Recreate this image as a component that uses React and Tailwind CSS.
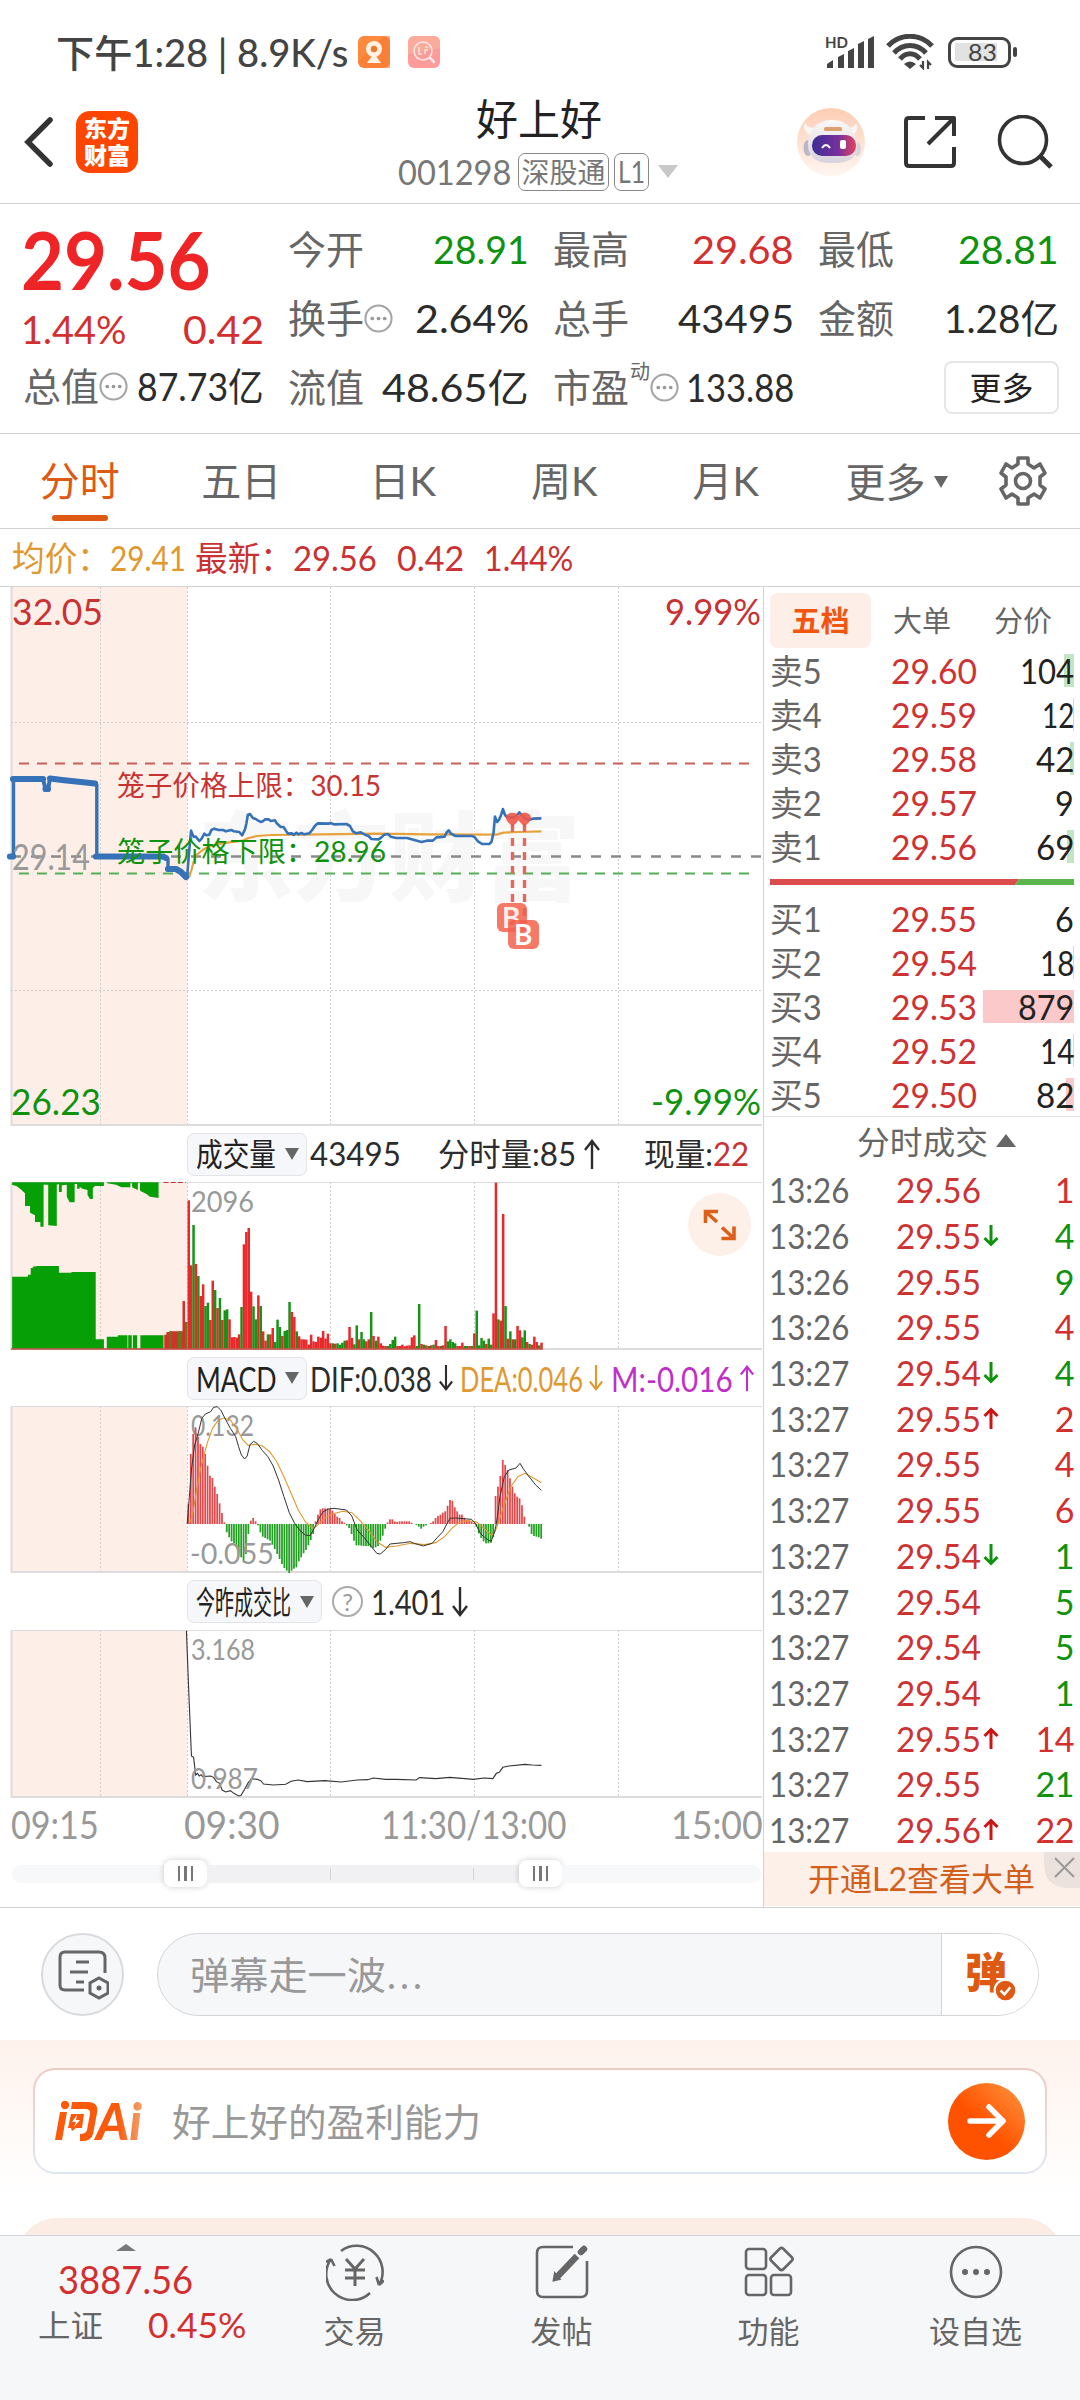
import { useLayoutEffect, useRef, useState } from "react";

const quotes = [
  [
    { label: "今开", value: "28.91", color: "text-[#0f930f]", w: "w-[96px]" },
    { label: "换手", value: "2.64%", color: "text-[#2c2c2c]", w: "w-[114px]", dots: true },
    { label: "流值", value: "48.65亿", color: "text-[#2c2c2c]", w: "w-[147px]" },
  ],
  [
    { label: "最高", value: "29.68", color: "text-[#d42f2f]", w: "w-[102px]" },
    { label: "总手", value: "43495", color: "text-[#2c2c2c]", w: "w-[116px]" },
    { label: "市盈", value: "133.88", color: "text-[#2c2c2c]", w: "w-[108px]", dots: true, sup: "动" },
  ],
  [
    { label: "最低", value: "28.81", color: "text-[#0f930f]", w: "w-[101px]" },
    { label: "金额", value: "1.28亿", color: "text-[#2c2c2c]", w: "w-[115px]" },
  ],
];

const sells = [
  { label: "卖5", price: "29.60", vol: "104", bar: "w-[10px]", w: "w-[54px]" },
  { label: "卖4", price: "29.59", vol: "12", bar: "w-px", w: "w-[32px]" },
  { label: "卖3", price: "29.58", vol: "42", bar: "w-1", w: "w-[38px]" },
  { label: "卖2", price: "29.57", vol: "9", bar: "w-0", w: "w-[19px]" },
  { label: "卖1", price: "29.56", vol: "69", bar: "w-[7px]", w: "w-[38px]" },
];

const buys = [
  { label: "买1", price: "29.55", vol: "6", bar: "w-0", w: "w-[19px]" },
  { label: "买2", price: "29.54", vol: "18", bar: "w-px", w: "w-[34px]" },
  { label: "买3", price: "29.53", vol: "879", bar: "w-[91px]", w: "w-[56px]" },
  { label: "买4", price: "29.52", vol: "14", bar: "w-px", w: "w-[34px]" },
  { label: "买5", price: "29.50", vol: "82", bar: "w-2", w: "w-[38px]" },
];

const trades = [
  ["13:26", "29.56", "", "1", "r"],
  ["13:26", "29.55", "down", "4", "g"],
  ["13:26", "29.55", "", "9", "g"],
  ["13:26", "29.55", "", "4", "r"],
  ["13:27", "29.54", "down", "4", "g"],
  ["13:27", "29.55", "up", "2", "r"],
  ["13:27", "29.55", "", "4", "r"],
  ["13:27", "29.55", "", "6", "r"],
  ["13:27", "29.54", "down", "1", "g"],
  ["13:27", "29.54", "", "5", "g"],
  ["13:27", "29.54", "", "5", "g"],
  ["13:27", "29.54", "", "1", "g"],
  ["13:27", "29.55", "up", "14", "r"],
  ["13:27", "29.55", "", "21", "g"],
  ["13:27", "29.56", "up", "22", "r"],
];

// one entry per minute from 09:30, r = up, g = down
const volumes =
  "r445 r250 g371 r254 g218 r158 r193 g128 g138 r86 r204 g176 r122 g152 r86 g115 g118 r88 r34 r35 r33 r43 g125 r313 r350 r362 r171 g127 g88 r160 g128 r52 r24 g43 r43 r62 g20 g87 g65 r38 g53 g56 g140 r110 r95 g52 r37 r28 r28 r27 r12 r42 r22 r20 r36 r33 r53 r30 r45 r16 g16 r15 g16 g12 g18 g24 r25 r65 r32 g13 g70 r28 g50 g28 r22 r28 g110 r38 g24 r36 r16 r9 r8 g8 g14 g26 g36 r8 r8 r12 r7 r9 r10 r34 r40 g8 g134 r14 g12 r10 g8 r10 g12 r26 r8 g8 r10 r68 g22 g28 g20 g16 r8 r8 r18 g8 g8 r8 g8 r46 g114 g10 g32 g24 r14 g30 g12 r106 r498 g88 r84 r404 g128 r30 g52 r28 g28 r68 r55 g34 g55 r20 g14 r12 r36 r20 g10 r18".split(
    " "
  );

const macd = [
  60, 210, 270, 290, 262, 240, 232, 210, 175, 145, 138, 112, 90, 62, 33, 5, -25, -40, -52, -58,
  -68, -85, -100, -112, -90, -30, 10, 18, 8, -4, -25, -38, -42, -46, -50, -62, -75, -90, -105,
  -120, -132, -140, -147, -140, -134, -130, -112, -100, -88, -78, -64, -48, -30, 8, 28, 44, 47,
  47, 47, 46, 40, 30, 22, 18, 8, 4, -4, -12, -30, -50, -64, -64, -65, -66, -66, -66, -70, -72,
  -70, -66, -50, -35, -14, 5, 14, 14, 8, 6, 8, 8, 8, 8, 8, 4, 0, -3, -8, -14, -8, -4, 0, 3, 8,
  18, 24, 28, 34, 38, 55, 72, 70, 50, 38, 28, 28, 18, 12, 10, 8, 4, -8, -28, -42, -52, -58, -58,
  -56, -40, 84, 112, 144, 192, 177, 162, 137, 112, 92, 82, 77, 56, 22, 0, -8, -30, -36, -38, -40,
  -44,
];

const priceLine =
  "524,410 530,330 535,272 542,290 548,290 558,303 565,295 572,281 578,286 586,284 592,270 600,266 612,270 625,270 632,274 648,270 655,274 670,276 678,286 686,268 690,250 694,224 700,222 708,234 716,237 722,241 730,246 736,244 742,238 752,238 758,243 770,241 774,249 780,255 786,261 794,261 800,271 806,281 818,280 822,285 830,278 836,283 844,279 852,283 866,280 874,270 882,257 890,250 920,251 925,249 935,253 970,252 980,258 988,274 998,280 1010,277 1022,284 1032,288 1040,297 1060,298 1068,292 1076,284 1086,282 1094,290 1110,294 1140,294 1160,300 1180,306 1195,302 1212,302 1222,292 1245,290 1250,278 1256,271 1262,280 1275,288 1320,288 1328,290 1338,304 1350,312 1370,312 1376,306 1382,278 1386,230 1392,246 1398,238 1403,225 1408,207 1414,225 1420,232 1440,232 1448,225 1454,217 1460,224 1468,234 1480,240 1492,236 1516,235";
const avgLine =
  "524,412 530,410 536,390 542,365 550,345 570,328 590,318 620,310 680,302 695,294 720,288 760,285 900,283 1060,281 1200,283 1390,284 1410,278 1450,276 1516,274";
const difLine =
  "524,1242 528,1190 536,1080 545,1005 555,970 565,925 575,912 590,905 598,892 608,890 618,900 630,925 645,955 660,980 668,1010 676,1035 685,1047 692,1038 700,1004 710,994 720,1000 735,1022 750,1040 765,1068 780,1110 795,1160 810,1208 825,1240 840,1262 855,1275 868,1277 880,1255 893,1225 905,1205 920,1197 935,1195 970,1200 985,1218 1000,1260 1020,1283 1040,1310 1055,1330 1065,1332 1080,1318 1092,1302 1130,1298 1148,1295 1160,1300 1185,1308 1210,1300 1225,1282 1240,1265 1252,1240 1260,1225 1275,1224 1320,1228 1330,1238 1345,1270 1360,1285 1375,1295 1385,1265 1390,1240 1400,1160 1412,1100 1425,1080 1445,1074 1456,1060 1465,1076 1480,1098 1500,1125 1516,1141";
const deaLine =
  "530,1242 540,1210 552,1130 565,1060 580,1000 595,955 610,932 625,924 645,930 665,960 680,990 695,1006 715,1003 735,1008 755,1025 775,1055 795,1100 815,1150 835,1200 855,1235 875,1255 885,1250 905,1228 930,1212 960,1204 985,1208 1005,1228 1030,1258 1055,1295 1080,1312 1110,1308 1150,1300 1190,1304 1220,1298 1245,1280 1265,1255 1285,1238 1310,1232 1335,1236 1355,1255 1375,1275 1385,1268 1395,1240 1410,1190 1430,1130 1450,1100 1470,1090 1490,1102 1516,1118";
const ratioLine =
  "522,392 528,560 536,768 542,772 548,825 553,820 558,828 563,824 568,830 590,828 598,832 606,845 615,850 622,870 632,876 645,872 655,880 668,888 675,886 685,868 695,848 705,836 720,838 730,842 738,852 765,855 800,853 815,844 835,840 860,845 910,842 955,846 1000,840 1030,839 1045,834 1080,838 1110,838 1165,840 1175,833 1220,836 1260,832 1325,838 1355,834 1380,836 1390,820 1398,817 1408,802 1425,798 1470,793 1490,795 1516,796";

// Text squeezed or stretched to the width of its box
const Fit = ({ className = "", children }) => {
  const box = useRef(null);
  const inner = useRef(null);
  const [scale, setScale] = useState(1);

  useLayoutEffect(() => {
    setScale(box.current.offsetWidth / inner.current.offsetWidth);
  }, [children]);

  return (
    <span ref={box} className={`inline-block shrink-0 whitespace-nowrap ${className}`}>
      <span
        ref={inner}
        className="inline-block origin-left"
        style={{ transform: `scaleX(${scale})` }}
      >
        {children}
      </span>
    </span>
  );
};

const Dots = () => (
  <svg className="size-[29px] shrink-0" viewBox="0 0 28 28" fill="none">
    <circle cx="14" cy="14" r="12.6" stroke="#a5a5a5" strokeWidth="2" />
    <circle cx="8" cy="14" r="1.8" fill="#999" />
    <circle cx="14" cy="14" r="1.8" fill="#999" />
    <circle cx="20" cy="14" r="1.8" fill="#999" />
  </svg>
);

const StatusBar = () => (
  <div className="flex h-[90px] items-center pl-[56px] pt-3.5 text-[38px] text-[#444]">
    <Fit className="w-[292px] font-medium leading-10">下午1:28 | 8.9K/s</Fit>
    <svg className="ml-2.5 size-8" viewBox="0 0 32 32">
      <rect width="32" height="32" rx="6" fill="#fb8a3c" />
      <path d="M0 26L26 0H32V32H6Z" fill="#fa7a33" opacity=".6" />
      <circle cx="16" cy="13" r="8" fill="#fff1e4" />
      <circle cx="16" cy="13" r="3.2" fill="#f07a2c" />
      <path d="M14 20H18L23 27H9Z" fill="#fff1e4" />
    </svg>
    <svg className="ml-[18px] size-8" viewBox="0 0 32 32" fill="none">
      <rect width="32" height="32" rx="6" fill="#fb9c9a" />
      <path d="M0 6a6 6 0 0 1 6-6H26a6 6 0 0 1 6 6V12L0 18Z" fill="#fcb09a" opacity=".7" />
      <circle cx="15" cy="15" r="9" stroke="#ffe6e4" strokeWidth="1.6" />
      <path d="M11 11V18H14M17 18V14H20M17 11H20" stroke="#ffe6e4" strokeWidth="1.4" />
      <path d="M22 22L26 26" stroke="#ffe6e4" strokeWidth="2.5" strokeLinecap="round" />
    </svg>
    <div className="ml-[385px] flex items-center">
      <svg className="h-9 w-[50px]" viewBox="0 0 50 36">
        <text x="0" y="14" fontSize="15" fontWeight="700" fill="#444" textLength="23">
          HD
        </text>
        <path
          d="M2 34V30L8 26V34ZM13 34V23L19 20V34ZM23 34V17L29 14V34ZM33 34V10L39 7V34ZM43 34V5L49 2V34Z"
          fill="#444"
        />
      </svg>
      <svg className="ml-[11px] h-9 w-[48px]" viewBox="0 0 48 36" fill="none" stroke="#444">
        <path d="M2 12C14 -1 34 -1 46 12" strokeWidth="5" />
        <path d="M8 19C17 9 31 9 40 19" strokeWidth="5" />
        <path d="M14 25C20 18 28 18 34 25" strokeWidth="5" />
        <path d="M18 30Q24 25 30 30L24 35Z" fill="#444" stroke="none" />
        <path d="M37 27V34L34 31M42 35V28L45 31" strokeWidth="2.2" />
      </svg>
      <div className="ml-3.5 flex h-[31px] w-[63px] items-center rounded-[9px] border-[3px] border-[#444] p-1">
        <div className="flex h-[18px] w-[42px] items-center justify-end bg-[#e2e2e2] text-[24px] leading-none">
          <Fit className="w-[29px]">83</Fit>
        </div>
      </div>
      <div className="ml-0.5 h-2.5 w-1 rounded bg-[#444]" />
    </div>
  </div>
);

const Header = () => (
  <header className="grid h-[114px] grid-cols-[398px_282px_1fr] border-b border-[#d2d2d2]">
    <div className="flex items-start pl-[24px] pt-[21px]">
      <svg className="mt-1.5 h-[50px] w-[30px]" viewBox="0 0 30 50" fill="none">
        <path d="M26 3L4 25L26 47" stroke="#333" strokeWidth="5.500" strokeLinecap="round" />
      </svg>
      <div className="ml-[22px] flex size-[62px] flex-col items-center justify-center rounded-[14px] bg-[#ff4600] text-[23px] font-black leading-[27px] text-white">
        <span>东方</span>
        <span>财富</span>
      </div>
    </div>
    <div className="flex flex-col items-center">
      <Fit className="mt-[3px] w-[126px] text-[42px] leading-[52px] text-[#222]">好上好</Fit>
      <div className="mt-[7px] flex h-[39px] w-full items-center text-[34px] text-[#777]">
        <Fit className="w-[113px]">001298</Fit>
        <span className="ml-[7px] flex h-[38px] w-[91px] items-center justify-center rounded-[7px] border border-[#888] text-[28px]">
          <Fit className="w-[84px] leading-8">深股通</Fit>
        </span>
        <span className="ml-[5px] flex h-[38px] w-[35px] items-center justify-center rounded-[7px] border border-[#888] text-[31px]">
          <Fit className="w-[27px]">L1</Fit>
        </span>
        <svg className="ml-[9px] h-3.5 w-5" viewBox="0 0 20 14">
          <path d="M0 0H20L10 13Z" fill="#c8c8c8" />
        </svg>
      </div>
    </div>
    <div className="flex items-start pl-[117px] pt-[18px]">
      <svg className="size-[68px]" viewBox="0 0 68 68">
        <defs>
          <linearGradient id="halo" x2="0" y2="1">
            <stop stopColor="#fdcdb3" />
            <stop offset="1" stopColor="#fff6f1" />
          </linearGradient>
          <linearGradient id="visor">
            <stop stopColor="#3b2f96" />
            <stop offset=".6" stopColor="#7a2f9c" />
            <stop offset="1" stopColor="#e2435e" />
          </linearGradient>
          <linearGradient id="shell" x2="0" y2="1">
            <stop stopColor="#fbf8f8" />
            <stop offset="1" stopColor="#d8d3dc" />
          </linearGradient>
        </defs>
        <circle cx="34" cy="34" r="34" fill="url(#halo)" />
        <path d="M13 27C6 23 6 17 8 15C11 20 16 20 20 20ZM49 20C54 20 58 19 59 15C62 20 60 25 54 28Z" fill="#faf6f6" />
        <ellipse cx="11" cy="40" rx="4.500" ry="8" fill="#b9b7c2" />
        <ellipse cx="60" cy="41" rx="4" ry="7" fill="#d8d4da" />
        <path d="M11 36C12 18 24 12 35 12C48 12 58 20 60 37C62 50 50 56 34 55C20 55 11 50 11 36Z" fill="url(#shell)" />
        <rect x="27" y="19" width="18" height="4" rx="1.500" fill="#dba06c" />
        <rect x="15" y="27" width="44" height="21" rx="10" fill="url(#visor)" />
        <path d="M25 40Q29 34 33 40" stroke="#fff" strokeWidth="2" fill="none" />
        <rect x="43" y="32" width="6" height="9" rx="2" fill="#fff" />
      </svg>
      <svg className="ml-[38px] mt-[7px] size-[54px]" viewBox="0 0 54 54" fill="none" stroke="#333" strokeWidth="4">
        <path d="M22 3H6Q3 3 3 6V48Q3 51 6 51H48Q51 51 51 48V32M32 3H51V21M51 3L25 29" strokeLinejoin="round" />
      </svg>
      <svg className="ml-[40px] mt-[7px] size-[56px]" viewBox="0 0 56 56" fill="none" stroke="#333" strokeWidth="3.600">
        <circle cx="26" cy="25" r="23.500" />
        <path d="M43 41L54 52" strokeWidth="5" />
      </svg>
    </div>
  </header>
);

const Quote = () => (
  <section className="grid h-[230px] grid-cols-4 gap-x-6 border-b border-[#d2d2d2] pl-[23px] pr-[21px] text-[39px]">
    <div className="flex flex-col">
      <Fit className="-ml-0.5 mt-[15px] w-[190px] text-[80px] font-bold leading-[80px] text-[#ee2426]">
        29.56
      </Fit>
      <div className="mt-[5px] flex h-[50px] items-center justify-between text-[#d42f2f]">
        <Fit className="-ml-0.5 w-[105px]">1.44%</Fit>
        <Fit className="w-[81px]">0.42</Fit>
      </div>
      <div className="mt-[7px] flex h-[50px] items-center">
        <Fit className="w-[76px] text-[#666]">总值</Fit>
        <Dots />
        <Fit className="ml-auto w-[127px] text-[#2c2c2c]">87.73亿</Fit>
      </div>
    </div>
    {quotes.map((col, i) => (
      <div key={i} className="flex flex-col pt-[11px]">
        {col.map((item) => (
          <div key={item.label} className="flex h-[69px] items-center">
            <Fit className="w-[76px] text-[#666]">{item.label}</Fit>
            {item.sup && (
              <sup className="mb-3.5 ml-px text-[20px] leading-none text-[#666]">{item.sup}</sup>
            )}
            {item.dots && <Dots />}
            <Fit className={`ml-auto ${item.w} ${item.color}`}>{item.value}</Fit>
          </div>
        ))}
        {i === 2 && (
          <button className="ml-auto mt-2 flex h-[53px] w-[115px] items-center justify-center rounded-lg border-2 border-[#e6e6e6] text-[32px] text-[#222]">
            更多
          </button>
        )}
      </div>
    ))}
  </section>
);

const PeriodTabs = () => (
  <nav className="flex h-[95px] border-b border-[#d2d2d2] text-[40px] text-[#666]">
    {["分时", "五日", "日K", "周K", "月K"].map((name, i) => (
      <div
        key={name}
        className={`flex w-[161.5px] flex-col items-center pr-0.5 pt-[22px] leading-[50px] ${
          i === 0 ? "text-[#de5a12]" : ""
        }`}
      >
        {name}
        {i === 0 && <span className="mt-[9px] h-1.5 w-[56px] rounded-full bg-[#de5a12]" />}
      </div>
    ))}
    <div className="ml-[38px] flex h-[95px] items-center">
      <Fit className="w-[80px]">更多</Fit>
      <svg className="ml-2 h-3 w-3.5" viewBox="0 0 14 12">
        <path d="M0 0H14L7 12Z" fill="#666" />
      </svg>
    </div>
    <svg className="ml-[49px] mt-[21px] size-[52px]" viewBox="0 0 52 52" fill="none" stroke="#666" strokeWidth="3.600" strokeLinejoin="round">
      <path d="M21 3H31V9L37 13L43 9L48 18L43 22V30L48 34L43 43L37 39L31 43V49H21V43L15 39L9 43L4 34L9 30V22L4 18L9 9L15 13L21 9Z" />
      <circle cx="26" cy="26" r="7.500" />
    </svg>
  </nav>
);

const Legend = () => (
  <div className="flex h-[58px] items-center border-b border-[#d2d2d2] pl-[12px] text-[34px] text-[#c83232]">
    <div className="flex text-[#e0982f]">
      <Fit className="w-[98px]">均价：</Fit>
      <Fit className="w-[76px]">29.41</Fit>
    </div>
    <Fit className="ml-[9px] w-[98px]">最新：</Fit>
    <Fit className="w-[84px]">29.56</Fit>
    <Fit className="ml-[20px] w-[67px]">0.42</Fit>
    <Fit className="ml-[20px] w-[89px]">1.44%</Fit>
  </div>
);

const Label = ({ x, y, w, size, fill, children }) => (
  <text x={x} y={y} fontSize={size} fill={fill} textLength={w} lengthAdjust="spacingAndGlyphs">
    {children}
  </text>
);

const Grid = ({ top, bottom }) => (
  <>
    <rect x="11" y={top} width="176" height={bottom - top} fill="#fdeee8" />
    <g stroke="#ccc" strokeWidth="1" strokeDasharray="2 2">
      {[100.5, 187.5, 330.5, 474.5, 618.5].map((x) => (
        <path key={x} d={`M${x} ${top}V${bottom}`} />
      ))}
    </g>
    <path d={`M11.5 ${top}V${bottom}`} stroke="#dcdcdc" strokeWidth="2" />
    <path d={`M11 ${bottom - 1}H762`} stroke="#dcdcdc" strokeWidth="2" />
  </>
);

const PriceChart = () => (
  <svg className="block h-[539px] w-[763px]" viewBox="0 587 763 539" fill="none">
    <Grid top={587} bottom={1126} />
    <path d="M11 722.5H762M11 990.5H762" stroke="#ccc" strokeDasharray="2 2" />
    <text x="198" y="893" fontSize="97" fontWeight="900" fill="#f7f7f7" textLength="382" lengthAdjust="spacingAndGlyphs">
      东方财富
    </text>
    <path d="M19 763.5H750" stroke="#c86058" strokeWidth="1.800" strokeDasharray="10 8" />
    <path d="M19 873.5H750" stroke="#55b055" strokeWidth="1.800" strokeDasharray="10 8" />
    <path d="M11 856.5H762" stroke="#8a8a8a" strokeWidth="2.400" strokeDasharray="10 10" />
    <g transform="translate(0 740) scale(.35714 .33333)" strokeLinejoin="round">
      <polyline points={avgLine} stroke="#e8a23c" strokeWidth="2.200" vectorEffect="non-scaling-stroke" />
      <polyline points={priceLine} stroke="#3672b8" strokeWidth="2.600" vectorEffect="non-scaling-stroke" />
    </g>
    <path d="M13.5 856V779M96.8 784V856M168 858V869" stroke="#3672b8" strokeWidth="3.400" />
    <path
      d="M10 856.500H13M13 779H43M45.500 789H48M50 778.500L62 780L95 783.500M96 856.500H163L166 858M168 869H176L181 872L186 877"
      stroke="#3672b8"
      strokeWidth="6.200"
      strokeLinecap="round"
      strokeLinejoin="round"
    />
    <path d="M43 779L45.500 789M48 789L50 779" stroke="#3672b8" strokeWidth="4" />
    <path d="M512.5 824V903M524.5 824V920" stroke="#e2695d" strokeWidth="3.400" strokeDasharray="8 6" />
    <g fill="#ef5548" fillOpacity=".9">
      <path d="M506 818C506 811 519 811 519 818C519 822 515 823 512.500 827C510 823 506 822 506 818Z" />
      <path d="M518 818C518 811 531 811 531 818C531 822 527 823 524.500 827C522 823 518 822 518 818Z" />
    </g>
    <g fontSize="28" fontWeight="700">
      <rect x="497" y="903" width="30" height="29" rx="6" fill="#f4604c" fillOpacity=".85" />
      <text x="502" y="927.500" fill="#fff" fillOpacity=".9">B</text>
      <rect x="508" y="920" width="31" height="29" rx="6" fill="#f4604c" fillOpacity=".85" />
      <text x="514" y="944.500" fill="#fff">B</text>
    </g>
    <Label x="12" y="625" w="91" size="37" fill="#c83232">32.05</Label>
    <Label x="665" y="625" w="96" size="37" fill="#c83232">9.99%</Label>
    <Label x="12" y="870" w="78" size="37" fill="#999">29.14</Label>
    <Label x="11" y="1115" w="90" size="37" fill="#0f930f">26.23</Label>
    <Label x="651" y="1115" w="110" size="37" fill="#0f930f">-9.99%</Label>
    <Label x="117" y="796" w="264" size="28" fill="#c83232">笼子价格上限：30.15</Label>
    <Label x="117" y="862" w="269" size="28" fill="#0f930f">笼子价格下限：28.96</Label>
  </svg>
);

const VolumeChart = () => (
  <svg className="block h-[168px] w-[763px]" viewBox="0 1182 763 168" fill="none">
    <Grid top={1182} bottom={1350} />
    <path d="M11 1182.5H762" stroke="#dcdcdc" />
    <g transform="translate(0 1110) scale(.35714 .33333)">
      <g fill="#06a006">
        <path d="M34 716V500H78V494H86V474H92V470L105 468H165V488H200V486H268V688H291V716ZM299 716V680H330V676H357V716ZM359 716V676H369V716ZM372 716V676H384V716ZM393 716V676H458V716Z" />
        <path d="M34 217V225L46 228L58 238L70 250V288H84V308L98 316V336H113V350H122V224H135V346L159 348V224L165 222V246H173V226L187 224V260L195 277H209V222H216V236H223V230L231 236L245 240V255L252 267H260V234L266 228H291V217ZM300 217V220L325 224L340 232H365V220H370V232L386 240V218H392V242L410 252L420 260L444 264V217Z" />
      </g>
      <path d="M458 217H520" stroke="#c83232" strokeWidth="4" strokeDasharray="14 6" />
      <path d="M460 716V674H466V666H474V664H511V573H518V716Z" fill="#d23028" />
      <path d="M474 716V664H480V716ZM498 716V664H509V716ZM518 716V636H525V716Z" fill="#5f7d1c" />
      {volumes.map((item, i) => {
        const h = Number(item.slice(1));
        return (
          <rect
            key={i}
            x={525 + i * 6.72}
            y={716 - h}
            width="7"
            height={h}
            fill={item[0] === "r" ? "#e8282a" : "#179417"}
          />
        );
      })}
    </g>
    <path d="M11 1349H543" stroke="#c04a3a" strokeWidth="1.400" />
    <Label x="191" y="1212" w="63" size="28" fill="#999">2096</Label>
    <circle cx="719.500" cy="1224.500" r="31.500" fill="#fdf0e9" />
    <path
      d="M705.500 1223V1211.500H718M706 1212L717 1222M721.500 1238.500H734V1226.500M733.500 1238L722 1227.500"
      stroke="#dc5f1a"
      strokeWidth="3.600"
    />
  </svg>
);

const MacdChart = () => (
  <svg className="block h-[167px] w-[763px]" viewBox="0 1406 763 167" fill="none">
    <Grid top={1406} bottom={1573} />
    <path d="M11 1406.5H762" stroke="#dcdcdc" />
    <Label x="191" y="1436" w="63" size="28" fill="#999">0.132</Label>
    <g transform="translate(0 1110) scale(.35714 .33333)">
      {macd.map((v, i) => (
        <rect
          key={i}
          x={525 + i * 6.72}
          y={v > 0 ? 1242 - v : 1242}
          width="4.900"
          height={Math.abs(v)}
          fill={v > 0 ? "#e2474a" : "#22a022"}
        />
      ))}
      <polyline points={deaLine} stroke="#e0982f" strokeWidth="1.100" vectorEffect="non-scaling-stroke" />
      <polyline points={difLine} stroke="#333" strokeWidth="1" vectorEffect="non-scaling-stroke" />
    </g>
    <Label x="190" y="1564" w="84" size="28" fill="#999">-0.055</Label>
  </svg>
);

const RatioChart = () => (
  <svg className="block h-[168px] w-[763px]" viewBox="0 1630 763 168" fill="none">
    <Grid top={1630} bottom={1798} />
    <path d="M11 1630.5H762" stroke="#dcdcdc" />
    <g transform="translate(0 1500) scale(.35714 .33333)">
      <polyline points={ratioLine} stroke="#333" strokeWidth="1.100" vectorEffect="non-scaling-stroke" />
    </g>
    <Label x="191" y="1660" w="64" size="28" fill="#999">3.168</Label>
    <Label x="191" y="1789" w="67" size="28" fill="#999">0.987</Label>
  </svg>
);

const Picker = ({ className, text, children }) => (
  <div className={`flex h-[43px] shrink-0 items-center justify-between rounded-[7px] border border-[#e3e4e8] bg-[#f6f7fa] pl-2 pr-[7px] text-[#222] ${className}`}>
    <Fit className={text}>{children}</Fit>
    <svg className="h-3 w-3.5" viewBox="0 0 14 12">
      <path d="M0 0H14L7 12Z" fill="#666" />
    </svg>
  </div>
);

const Arrow = ({ up, color, className = "h-[30px] w-4" }) => (
  <svg className={`shrink-0 ${className}`} viewBox="0 0 16 30" fill="none" stroke={color} strokeWidth="2.400">
    <path d={up ? "M8 30V2M1 11L8 2L15 11" : "M8 0V28M1 19L8 28L15 19"} />
  </svg>
);

const Handle = () => (
  <div className="flex h-[27px] w-[43px] items-center justify-center gap-[4px] rounded-lg bg-white shadow-[0_0_6px_rgba(0,0,0,0.2)]">
    <i className="h-[15px] w-[2.5px] bg-[#777]" />
    <i className="h-[15px] w-[2.5px] bg-[#777]" />
    <i className="h-[15px] w-[2.5px] bg-[#777]" />
  </div>
);

const Charts = () => (
  <div className="w-[763px] text-[32px] text-[#2c2c2c]">
    <PriceChart />
    <div className="flex h-[56px] items-center pl-[187px]">
      <Picker className="w-[120px]" text="w-[80px]">成交量</Picker>
      <Fit className="ml-[3px] w-[91px]">43495</Fit>
      <Fit className="ml-[37px] w-[138px]">分时量:85</Fit>
      <Arrow up color="#2c2c2c" className="ml-2 h-[30px] w-4" />
      <Fit className="ml-[44px] w-[69px]">现量:</Fit>
      <Fit className="w-[36px] text-[#c83232]">22</Fit>
    </div>
    <VolumeChart />
    <div className="flex h-[56px] items-center pl-[187px] text-[34px]">
      <Picker className="w-[120px]" text="w-[81px]">MACD</Picker>
      <Fit className="ml-[3px] w-[122px]">DIF:0.038</Fit>
      <Arrow color="#2c2c2c" className="ml-[7px] h-[30px] w-3.5" />
      <Fit className="ml-[7px] w-[123px] text-[#e0982f]">DEA:0.046</Fit>
      <Arrow color="#e0982f" className="ml-1.5 h-[30px] w-3.5" />
      <Fit className="ml-[8px] w-[122px] text-[#c030c8]">M:-0.016</Fit>
      <Arrow up color="#c030c8" className="ml-[7px] h-[30px] w-3.5" />
    </div>
    <MacdChart />
    <div className="flex h-[57px] items-center pl-[187px]">
      <Picker className="w-[135px]" text="w-[95px]">今昨成交比</Picker>
      <span className="ml-2.5 flex size-[31px] items-center justify-center rounded-full border-[2.5px] border-[#aaa] text-[24px] leading-none text-[#999]">
        ?
      </span>
      <Fit className="ml-[8px] w-[74px] text-[35px]">1.401</Fit>
      <Arrow color="#2c2c2c" className="ml-[7px] h-[30px] w-4" />
    </div>
    <RatioChart />
    <div className="flex h-[52px] items-center pl-[11px] text-[38px] text-[#999]">
      <Fit className="w-[88px]">09:15</Fit>
      <Fit className="ml-[85px] w-[96px]">09:30</Fit>
      <Fit className="ml-[101px] w-[186px]">11:30/13:00</Fit>
      <Fit className="ml-[104px] w-[92px]">15:00</Fit>
    </div>
    <div className="mt-[10px] flex h-[27px] items-center pl-3">
      <div className="h-[18px] w-[152px] rounded-l-full bg-[#f7f8fa]" />
      <Handle />
      <div className="flex h-[18px] w-[312px] items-center bg-[#f1f1f4] pl-[123px]">
        <i className="mr-[142px] h-3 w-px bg-[#d5d5d8]" />
        <i className="h-3 w-px bg-[#d5d5d8]" />
      </div>
      <Handle />
      <div className="h-[18px] w-[199px] rounded-r-full bg-[#f7f8fa]" />
    </div>
  </div>
);

const OrderRow = ({ item, tint }) => (
  <div className="flex h-11 items-center pl-1.5 pr-1.5 text-[34px]">
    <Fit className="w-[52px] text-[#666]">{item.label}</Fit>
    <Fit className="ml-[69px] w-[86px] text-[#cd3333]">{item.price}</Fit>
    <div className="relative ml-auto flex h-[33px] w-[97px] items-center justify-end text-[#222]">
      <span className={`absolute right-0 top-0 h-full ${tint} ${item.bar}`} />
      <Fit className={`relative ${item.w}`}>{item.vol}</Fit>
    </div>
  </div>
);

const OrderBook = () => (
  <aside className="w-[317px] border-l border-[#d2d2d2]">
    <div className="flex h-[61px] items-center pl-1.5 pt-1.5 text-[29px] text-[#666]">
      <span className="flex h-[55px] w-[101px] items-center justify-center rounded-lg bg-[#fdeee8] font-bold text-[#f0560f]">
        五档
      </span>
      <span className="ml-[22px]">大单</span>
      <span className="ml-[43px]">分价</span>
    </div>
    {sells.map((item) => (
      <OrderRow key={item.label} item={item} tint="bg-[#c2e6c4]" />
    ))}
    <svg className="ml-1.5 mt-[11px] block h-1.5 w-[304px]" viewBox="0 0 304 6">
      <path d="M0 0H249L245 6H0Z" fill="#dc4c4c" />
      <path d="M249 0H304V6H245Z" fill="#5cb54c" />
    </svg>
    <div className="pt-[11px]">
      {buys.map((item) => (
        <OrderRow key={item.label} item={item} tint="bg-[#fbc9ca]" />
      ))}
    </div>
    <div className="flex h-[51px] items-center border-t border-[#e2e2e2] pl-[93px] text-[32px] text-[#666]">
      <Fit className="w-[131px]">分时成交</Fit>
      <svg className="mb-1 ml-2 h-[13px] w-5" viewBox="0 0 20 13">
        <path d="M0 13H20L10 0Z" fill="#666" />
      </svg>
    </div>
    {trades.map(([time, price, dir, vol, side], i) => (
      <div key={i} className="flex h-[45.7px] items-center pl-[5px] pr-1.5 text-[34px]">
        <Fit className="w-[80px] text-[#666]">{time}</Fit>
        <Fit className="ml-[47px] w-[85px] text-[#cd3333]">{price}</Fit>
        {dir && (
          <svg className="ml-0.5 h-[22px] w-4" viewBox="0 0 16 22" fill="none" stroke={dir === "up" ? "#cc1414" : "#0f930f"} strokeWidth="3">
            <path d={dir === "up" ? "M8 22V2M1.500 9L8 2.500L14.500 9" : "M8 0V20M1.500 13L8 19.500L14.500 13"} />
          </svg>
        )}
        <span className={`ml-auto tracking-[-0.5px] ${side === "r" ? "text-[#d42f2f]" : "text-[#0f930f]"}`}>{vol}</span>
      </div>
    ))}
    <div className="flex h-[54px] items-start bg-[#fdf0e9] pl-[44px] text-[32px] text-[#d2601c]">
      <Fit className="w-[227px] leading-[54px]">开通L2查看大单</Fit>
      <svg className="ml-auto h-9 w-9" viewBox="0 0 36 36" fill="none">
        <path d="M0 0H36V36H22Q0 34 0 12Z" fill="#ece2dd" />
        <path d="M11 6L30 25M30 6L11 25" stroke="#999" strokeWidth="2" />
      </svg>
    </div>
  </aside>
);

const Barrage = () => (
  <div className="flex h-[133px] items-center border-t border-[#d2d2d2] pl-[41px]">
    <div className="flex size-[83px] items-center justify-center rounded-full border-2 border-[#d9dade] bg-[#f6f7f9]">
      <svg className="size-[52px]" viewBox="0 0 52 52" fill="none" stroke="#666" strokeWidth="3">
        <path d="M27 42H8Q3 42 3 37V9Q3 4 8 4H42Q48 4 48 10V25" />
        <path d="M19 14H32M13 24H31M19 34H27" />
        <path d="M42 30L51 35V45L42 50L33 45V35Z" />
        <circle cx="42" cy="40" r="2.500" fill="#666" stroke="none" />
      </svg>
    </div>
    <div className="ml-[33px] flex h-[83px] w-[882px] overflow-hidden rounded-full border border-[#d2d4d8] bg-[#f6f7f9]">
      <div className="flex w-[783px] items-center pl-[32px] text-[38px] text-[#999]">
        <Fit className="w-[196px]">弹幕走一波</Fit>
        <span className="ml-px tracking-[4px]">...</span>
      </div>
      <div className="relative flex flex-1 items-center border-l border-[#d2d4d8] bg-white pb-1 pl-[23px] text-[42px] font-black leading-none text-[#de5a12]">
        弹
        <svg className="absolute left-[51px] top-[44px] size-[25px]" viewBox="0 0 23 23" fill="none">
          <circle cx="11.500" cy="11.500" r="10" fill="#de5a12" stroke="#fff" strokeWidth="2" />
          <path d="M7 11.500L10.500 15L16 8.500" stroke="#fff" strokeWidth="2.400" />
        </svg>
      </div>
    </div>
  </div>
);

const AskAi = () => (
  <div className="flex h-[195px] flex-col bg-linear-to-b from-[#fef2ec] to-white to-80% pt-7">
    <div className="mx-[33px] h-[106px] rounded-[22px] bg-linear-to-b from-[#eccac2] to-[#dfe6ef] p-0.5">
      <div className="flex h-full items-center rounded-[20px] bg-white pl-5 pr-[20px]">
        <svg className="h-[42px] w-[90px]" viewBox="0 0 90 42">
          <defs>
            <linearGradient id="ai">
              <stop offset=".5" stopColor="#fb5a0c" />
              <stop offset="1" stopColor="#f4a06c" />
            </linearGradient>
          </defs>
          <path d="M5 12H12L7 40H0ZM17 2H34Q44 3 42 13L38 34Q36 42 25 41V34Q31 34 32 30L35 14Q36 9 30 9H16Z" fill="#fb5a0c" />
          <circle cx="10" cy="5" r="4.200" fill="#fb5a0c" />
          <path d="M16 14H29L27 28H21L17 31L16 28H13Z" fill="#fb5a0c" />
          <path d="M22 15L17 22H21L19 27L25 20H21Z" fill="#fff" />
          <text x="41" y="40" fontSize="51" fontWeight="900" fontStyle="italic" fill="url(#ai)" textLength="46" lengthAdjust="spacingAndGlyphs">
            Ai
          </text>
        </svg>
        <Fit className="ml-[27px] w-[309px] text-[38px] leading-[50px] text-[#999]">好上好的盈利能力</Fit>
        <div className="ml-auto flex size-[77px] items-center justify-center rounded-full bg-linear-[45deg] from-[#ff5200] from-45% to-[#ff9640]">
          <svg className="size-10" viewBox="0 0 40 40" fill="none" stroke="#fff" strokeWidth="5.500" strokeLinecap="round" strokeLinejoin="round">
            <path d="M3 20H36M22 6L36 20L22 34" />
          </svg>
        </div>
      </div>
    </div>
    <div className="mx-[17px] mt-auto h-[17px] overflow-hidden">
      <div className="h-20 rounded-[40px] bg-[#fcede4]" />
    </div>
  </div>
);

const NavItem = ({ name, children }) => (
  <div className="flex w-[207px] flex-col items-center pt-[7px] text-[31px] leading-[44px] text-[#666]">
    <svg className="size-[58px]" viewBox="0 0 58 58" fill="none" stroke="#666" strokeWidth="2.600">
      {children}
    </svg>
    <span className="mt-2">{name}</span>
  </div>
);

const BottomNav = () => (
  <footer className="flex h-[165px] border-t border-[#d2d4d8] bg-[#f6f7f9]">
    <div className="flex w-[251px] flex-col items-center text-[#d42f2f]">
      <svg className="mt-2 h-[7px] w-5" viewBox="0 0 20 7">
        <path d="M0 7H20L10 0Z" fill="#77777c" />
      </svg>
      <Fit className="mt-[4px] w-[135px] text-[38px] leading-[48px]">3887.56</Fit>
      <div className="flex w-full items-center pl-[38px] text-[34px] leading-[44px]">
        <Fit className="w-[65px] text-[31px] text-[#666]">上证</Fit>
        <Fit className="ml-[45px] w-[98px]">0.45%</Fit>
      </div>
    </div>
    <NavItem name="交易">
      <path d="M15 7A26 26 0 0 1 53 41M53 41L58 36.500M53 41L50.500 33M44 49A26 26 0 0 1 5 15M5 15L0 18M5 15L8.500 22" transform="translate(0 1)" />
      <path d="M20 16L29 26L38 16M19 27H39M19 35H39M29 26V43" strokeWidth="3" />
    </NavItem>
    <NavItem name="发帖">
      <path d="M40 4H10Q4 4 4 10V48Q4 54 10 54H48Q54 54 54 48V18" />
      <path d="M24 34L44 13" strokeWidth="6.500" />
      <path d="M48 9L51 6" strokeWidth="6.500" strokeLinecap="round" />
      <path d="M21 37L22 31L26 36Z" fill="#666" />
    </NavItem>
    <NavItem name="功能">
      <rect x="6" y="6" width="20" height="20" rx="3" />
      <rect x="6" y="32" width="20" height="20" rx="3" />
      <rect x="31" y="32" width="20" height="20" rx="3" />
      <rect x="33" y="7.500" width="17" height="17" rx="2.500" transform="rotate(45 41.500 16)" />
    </NavItem>
    <NavItem name="设自选">
      <circle cx="29" cy="29" r="25" />
      <g fill="#666" stroke="none">
        <circle cx="18" cy="29" r="3" />
        <circle cx="29" cy="29" r="3" />
        <circle cx="40" cy="29" r="3" />
      </g>
    </NavItem>
  </footer>
);

export default function App() {
  return (
    <div className="flex h-[2400px] w-[1080px] flex-col overflow-hidden bg-white font-['Lato','Noto_Sans_CJK_SC',sans-serif]">
      <StatusBar />
      <Header />
      <Quote />
      <PeriodTabs />
      <Legend />
      <div className="flex h-[1320px]">
        <Charts />
        <OrderBook />
      </div>
      <Barrage />
      <AskAi />
      <BottomNav />
    </div>
  );
}
